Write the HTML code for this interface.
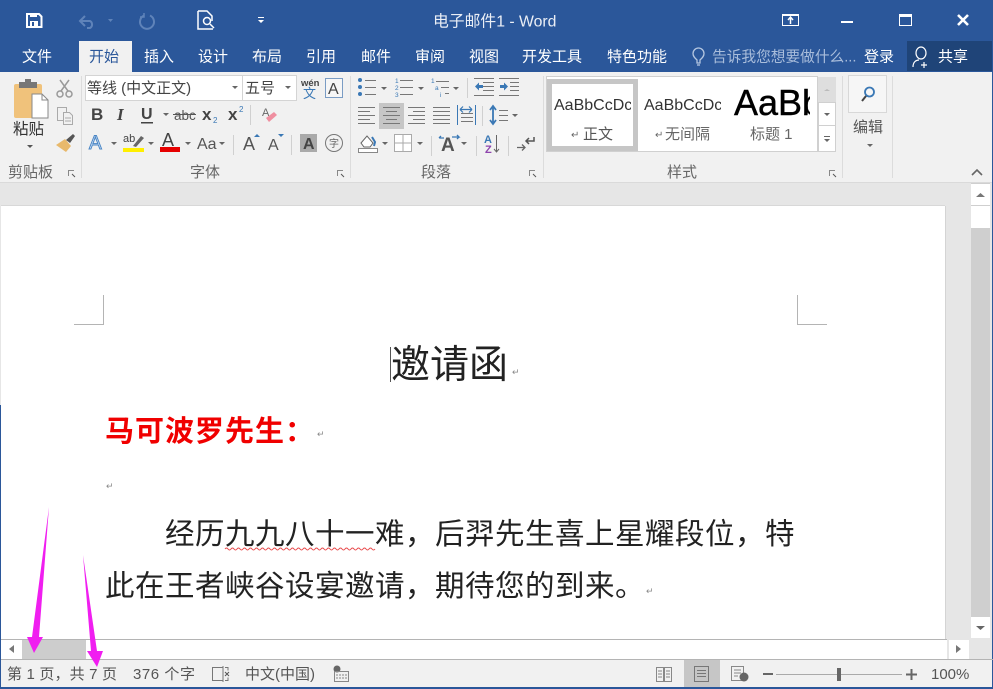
<!DOCTYPE html>
<html lang="zh"><head><meta charset="utf-8"><title>电子邮件1 - Word</title>
<style>
html,body{margin:0;padding:0;width:993px;height:689px;overflow:hidden;background:#fff}
svg{display:block;position:absolute;left:0;top:0;filter:blur(.35px)}
text{font-family:"Liberation Sans","Noto Sans CJK SC",sans-serif}
.cj{font-family:"Noto Sans CJK SC","Liberation Sans",sans-serif}
.tab{fill:#fff;font-size:15px}
.grp{fill:#666;font-size:15px}
.st{fill:#555;font-size:15px}
.ln{fill:none;stroke:#777;stroke-width:1}
.ar{fill:#666}
</style></head><body>
<svg width="993" height="689" viewBox="0 0 993 689" xmlns="http://www.w3.org/2000/svg">
<defs>
<clipPath id="c1"><rect x="552" y="90" width="79" height="30"/></clipPath>
<clipPath id="c2"><rect x="642" y="90" width="79" height="30"/></clipPath>
<clipPath id="c3"><rect x="730" y="80" width="80" height="44"/></clipPath>
<path id="dn" d="M0 0h6l-3 3z"/>
<g id="launch" fill="none" stroke="#888"><path d="M.5 6V.5H6"/><path d="M4 4l3 3" stroke="#555"/></g>
</defs>
<!-- backgrounds -->
<rect width="993" height="689" fill="#e6e6e6"/>
<rect width="993" height="72" fill="#2b579a"/>
<rect y="72" width="993" height="110" fill="#f1f1f1"/>
<rect y="182" width="993" height="1" fill="#dadada"/>
<rect x="1" y="206" width="944" height="434" fill="#fff"/>
<rect x="945" y="206" width="1" height="434" fill="#d4d4d4"/>
<rect x="1" y="205" width="944" height="1" fill="#d8d8d8"/>
<rect y="659" width="993" height="28" fill="#f1f1f1"/>
<rect y="687" width="993" height="2" fill="#2b579a"/>
<rect y="405" width="1" height="284" fill="#2b579a"/>
<rect x="992" y="72" width="1" height="617" fill="#2b579a"/>

<!-- title bar -->
<text x="433" y="26.500" font-size="15.800" fill="#fff" opacity=".9">电子邮件1 - Word</text>
<path d="M27 14h12l2.500 2.500V27H27z" fill="none" stroke="#fff" stroke-width="2"/>
<rect x="30" y="13" width="7" height="4" fill="#fff"/><rect x="30" y="21" width="8" height="6" fill="#fff"/><rect x="32" y="22" width="2" height="4" fill="#2b579a"/>
<g fill="none" stroke="#5f83b9" stroke-width="2"><path d="M81 21h9a4 4 0 0 1 0 7h-3"/><path d="M85 16l-5 5 5 5"/><path d="M150 15.500a7 7 0 1 1-6 0"/><path d="M144 13v4h-4" stroke-width="1.500"/></g>
<path d="M108 19h5l-2.500 3z" fill="#5f83b9"/>
<g fill="none" stroke="#fff" stroke-width="1.500"><path d="M198 11h9l5 5v5M198 11v18h15"/><circle cx="207" cy="21" r="3.500"/><path d="M210 24l4 4"/></g>
<path d="M258 17h6v1h-6zM258 20h6l-3 3z" fill="#fff"/>
<g fill="none" stroke="#fff"><rect x="782.500" y="14.500" width="16" height="11"/><path d="M790.500 24v-6M788 20l2.500-3 2.500 3" stroke-width="1.500"/></g>
<rect x="782" y="14" width="17" height="2" fill="#fff"/>
<rect x="841" y="21" width="12" height="2" fill="#fff"/>
<rect x="899.500" y="14.500" width="12" height="11" fill="none" stroke="#fff"/><rect x="899" y="14" width="13" height="3" fill="#fff"/>
<path d="M958 15l10 10M968 15l-10 10" stroke="#fff" stroke-width="2.600" fill="none"/>

<!-- tabs -->
<rect x="79" y="41" width="53" height="31" fill="#f1f1f1"/>
<text class="tab" x="22" y="61.500">文件</text>
<text class="tab" x="89" y="61.500" style="fill:#2b579a">开始</text>
<text class="tab" x="144" y="61.500">插入</text>
<text class="tab" x="198" y="61.500">设计</text>
<text class="tab" x="252" y="61.500">布局</text>
<text class="tab" x="306" y="61.500">引用</text>
<text class="tab" x="361" y="61.500">邮件</text>
<text class="tab" x="415" y="61.500">审阅</text>
<text class="tab" x="469" y="61.500">视图</text>
<text class="tab" x="522" y="61.500">开发工具</text>
<text class="tab" x="607" y="61.500">特色功能</text>
<g fill="none" stroke="#b4c6e0" stroke-width="1.300"><path d="M697 63v-3c-2-2-4-3.500-4-6.500a5.500 5.500 0 0 1 11 0c0 3-2 4.500-4 6.500v3z"/><path d="M697 65h3"/></g>
<text x="712" y="61.500" font-size="14.700" fill="#a9bddb">告诉我您想要做什么...</text>
<text class="tab" x="864" y="61.500">登录</text>
<rect x="907" y="41" width="85" height="30" fill="#1f4478"/>
<g fill="none" stroke="#fff" stroke-width="1.200"><ellipse cx="921" cy="53" rx="5" ry="6"/><path d="M913 67c0-5 3-7 6-7M924 62v6M921 65h6"/></g>
<text class="tab" x="938" y="61.500">共享</text>

<!-- clipboard group -->
<rect x="14" y="84" width="28" height="34" rx="2" fill="#f0c27b"/>
<rect x="19" y="82" width="18" height="6" fill="#777"/><rect x="25" y="79" width="6" height="4" fill="#777"/>
<path d="M32 94h10l6 6v18H32z" fill="#fff" stroke="#888"/><path d="M42 94v6h6" fill="none" stroke="#888"/>
<text x="13" y="134" font-size="15.500" fill="#333">粘贴</text>
<use href="#dn" x="27" y="145" fill="#555"/>
<g fill="none" stroke="#999" stroke-width="1.500"><circle cx="60" cy="94" r="3"/><circle cx="69" cy="94" r="3"/><path d="M61 91l8-11M68 91l-8-11"/></g>
<g fill="#f1f1f1" stroke="#aaa"><path d="M57.500 107.500h9v13h-9z"/><path d="M63.500 112.500h6l3 3v9h-9z"/><path d="M65 118h6M65 121h6" fill="none"/></g>
<path d="M56 145l9-6 6 7-5 6z" fill="#e8b96c"/><path d="M66 140l7-6 2 2-5 7z" fill="#555"/>
<use href="#launch" x="68" y="170"/>
<text class="grp" x="8" y="177">剪贴板</text>
<rect x="81" y="76" width="1" height="102" fill="#dcdcdc"/>

<!-- font group -->
<rect x="85.500" y="75.500" width="157" height="25" fill="#fff" stroke="#d4d4d4"/>
<rect x="242.500" y="75.500" width="54" height="25" fill="#fff" stroke="#d4d4d4"/>
<text x="87" y="93" font-size="15" fill="#444">等线 (中文正文)</text>
<use href="#dn" x="232" y="86" class="ar"/>
<text x="245" y="93" font-size="15" fill="#444">五号</text>
<use href="#dn" x="285" y="86" class="ar"/>
<text x="301" y="86" font-size="9.500" fill="#444" font-weight="bold">wén</text>
<text x="303" y="98" font-size="13" fill="#3a78b5">文</text>
<rect x="325.500" y="78.500" width="17" height="19" fill="#f6f6f6" stroke="#7a9cc4"/>
<text x="328" y="94" font-size="16" fill="#444">A</text>

<text x="91" y="120" font-size="17" font-weight="bold" fill="#444">B</text>
<text x="117" y="120" font-size="17" font-weight="bold" font-style="italic" fill="#444" style="font-family:'Liberation Serif',serif">I</text>
<text x="141" y="119" font-size="16" fill="#444" font-weight="bold">U</text><rect x="141" y="122" width="12" height="1.500" fill="#444"/>
<use href="#dn" x="163" y="113" class="ar"/>
<text x="174" y="120" font-size="13.500" fill="#555">abc</text><rect x="173" y="114" width="23" height="1" fill="#555"/>
<text x="202" y="120" font-size="17" font-weight="bold" fill="#444">x</text><text x="213" y="123" font-size="8" fill="#3a78b5">2</text>
<text x="228" y="120" font-size="17" font-weight="bold" fill="#444">x</text><text x="239" y="112" font-size="8" fill="#3a78b5">2</text>
<rect x="250" y="105" width="1" height="20" fill="#d0d0d0"/>
<text x="262" y="116" font-size="11" fill="#666">A</text><path d="M266 118l8-6 3 3-8 7z" fill="#ef8fa0"/>

<text x="89" y="149" font-size="19" fill="#dceafa" stroke="#4a86c5" stroke-width="1">A</text>
<use href="#dn" x="111" y="142" class="ar"/>
<text x="123" y="142" font-size="11" fill="#444">ab</text><path d="M133 146l8-10 3 2-8 9z" fill="#666"/>
<rect x="123" y="148" width="21" height="4" fill="#ffef00"/>
<use href="#dn" x="148" y="142" class="ar"/>
<text x="162" y="146" font-size="18" fill="#444">A</text><rect x="160" y="147" width="20" height="5" fill="#e60000"/>
<use href="#dn" x="185" y="142" class="ar"/>
<text x="197" y="149" font-size="16" fill="#555">Aa</text>
<use href="#dn" x="219" y="142" class="ar"/>
<rect x="233" y="135" width="1" height="20" fill="#d0d0d0"/>
<text x="243" y="150" font-size="18" fill="#555">A</text><path d="M254 137l3-3 3 3z" fill="#3a78b5"/>
<text x="268" y="150" font-size="16" fill="#555">A</text><path d="M278 134h6l-3 3z" fill="#3a78b5"/>
<rect x="291" y="135" width="1" height="20" fill="#d0d0d0"/>
<rect x="300" y="134" width="17" height="18" fill="#aaa"/><text x="303" y="149" font-size="16" font-weight="bold" fill="#444">A</text>
<circle cx="334" cy="143" r="8.500" fill="none" stroke="#777"/><text x="329" y="147" font-size="10" fill="#666">字</text>
<use href="#launch" x="337" y="170"/>
<text class="grp" x="190" y="177">字体</text>
<rect x="350" y="76" width="1" height="102" fill="#dcdcdc"/>

<!-- paragraph group -->
<g fill="#3a78b5"><circle cx="360" cy="80" r="2"/><circle cx="360" cy="87" r="2"/><circle cx="360" cy="94" r="2"/></g>
<path class="ln" d="M365 80.500h11M365 87.500h11M365 94.500h11M400 80.500h13M400 87.500h13M400 94.500h13M436 81.500h13M441 87.500h8M445 93.500h4"/>
<g font-size="6.500" fill="#3a78b5"><text x="395" y="83">1</text><text x="395" y="90">2</text><text x="395" y="97">3</text><text x="431" y="83">1</text><text x="435" y="90">a</text><text x="440" y="97">i</text></g>
<use href="#dn" x="381" y="87" class="ar"/><use href="#dn" x="418" y="87" class="ar"/><use href="#dn" x="453" y="87" class="ar"/>
<rect x="467" y="78" width="1" height="20" fill="#d0d0d0"/>
<path class="ln" d="M474 78.500h20M483 82.500h11M483 86.500h11M483 90.500h11M474 95.500h20M499 78.500h20M510 82.500h9M510 86.500h9M510 90.500h9M499 95.500h20"/>
<path d="M475 86.500l4-4v2.500h4v3h-4v2.500zM508 86.500l-4-4v2.500h-4v3h4v2.500z" fill="#3a78b5"/>

<rect x="379" y="103" width="25" height="26" fill="#c6c6c6"/>
<path class="ln" d="M358 107.500h17M358 111.500h12M358 115.500h17M358 119.500h12M358 123.500h17M383 107.500h17M386 111.500h11M383 115.500h17M386 119.500h11M383 123.500h17M408 107.500h17M413 111.500h12M408 115.500h17M413 119.500h12M408 123.500h17M433 107.500h17M433 111.500h17M433 115.500h17M433 119.500h17M433 123.500h17M461 113.500h12M461 117.500h12M461 121.500h12"/>
<path d="M457.500 105v20M475.500 105v20" stroke="#3a78b5" fill="none"/><path d="M460 109.500h12M460 109.500l3-3M460 109.500l3 3M472 109.500l-3-3M472 109.500l-3 3" stroke="#3a78b5" fill="none" stroke-width="1.200"/>
<rect x="482" y="106" width="1" height="20" fill="#d0d0d0"/>
<path d="M493 107v16M490 110l3-4 3 4M490 120l3 4 3-4" stroke="#3a78b5" stroke-width="1.800" fill="none"/>
<path class="ln" d="M499 110.500h9M499 115.500h9M499 120.500h9"/>
<use href="#dn" x="512" y="114" class="ar"/>

<path d="M358.500 148.500h19v4h-19z" fill="#fff" stroke="#888"/>
<path d="M361 143l6-7 6 7-3 4h-6z" fill="#fff" stroke="#666"/><path d="M372 137l3 5-1 4" stroke="#3a78b5" stroke-width="2" fill="none"/>
<use href="#dn" x="382" y="142" class="ar"/>
<rect x="394.500" y="134.500" width="17" height="17" fill="#fff" stroke="#aaa"/><path d="M403 135v16M395 143h16" stroke="#aaa"/>
<use href="#dn" x="417" y="142" class="ar"/>
<rect x="431" y="136" width="1" height="20" fill="#d0d0d0"/>
<text x="441" y="151" font-size="19" font-weight="bold" fill="#555">A</text>
<path d="M439 138h5M439 138l2-2M452 137h7l-2-2M459 137l-2 2" stroke="#3a78b5" stroke-width="1.300" fill="none"/>
<use href="#dn" x="461" y="142" class="ar"/>
<rect x="476" y="136" width="1" height="20" fill="#d0d0d0"/>
<text x="484" y="143" font-size="11" font-weight="bold" fill="#3a78b5">A</text><text x="485" y="153" font-size="11" font-weight="bold" fill="#8e44ad">Z</text>
<path d="M496.500 135v17M494 149l2.500 3 2.500-3" stroke="#666" fill="none"/>
<rect x="508" y="136" width="1" height="20" fill="#d0d0d0"/>
<path d="M517 147.500h8M522 144.500l3 3-3 3" stroke="#666" stroke-width="1.300" fill="none"/>
<path d="M534 137v4h-8M529 138l-3 3 3 3" stroke="#555" stroke-width="1.500" fill="none"/>
<use href="#launch" x="529" y="170"/>
<text class="grp" x="421" y="177">段落</text>
<rect x="543" y="76" width="1" height="102" fill="#dcdcdc"/>

<!-- styles -->
<rect x="546.500" y="76.500" width="271" height="75" fill="#fff" stroke="#d0d0d0"/>
<rect x="549.500" y="81.500" width="86" height="67" fill="#fff" stroke="#c6c6c6" stroke-width="5"/>
<g clip-path="url(#c1)"><text x="554" y="110" font-size="16" fill="#333">AaBbCcDc</text></g>
<text x="571" y="138" font-size="10" fill="#666">↵</text><text x="583" y="139" font-size="15" fill="#555">正文</text>
<g clip-path="url(#c2)"><text x="644" y="110" font-size="16" fill="#333">AaBbCcDc</text></g>
<text x="655" y="138" font-size="10" fill="#666">↵</text><text x="665" y="139" font-size="15" fill="#666">无间隔</text>
<g clip-path="url(#c3)"><text x="734" y="115" font-size="36" fill="#000" stroke="#000" stroke-width=".4">AaBbC</text></g>
<text x="750" y="139" font-size="15" fill="#666">标题 1</text>
<rect x="818" y="77" width="18" height="25" fill="#dedede"/>
<rect x="818.500" y="102.500" width="17" height="23" fill="#fff" stroke="#d0d0d0"/>
<rect x="818.500" y="125.500" width="17" height="26" fill="#fff" stroke="#d0d0d0"/>
<path d="M824 91l3-2 3 2z" fill="#bbb"/><use href="#dn" x="824" y="113" class="ar"/>
<path d="M824 136.500h6" stroke="#666"/><use href="#dn" x="824" y="139" class="ar"/>
<use href="#launch" x="829" y="170"/>
<text class="grp" x="667" y="177">样式</text>
<rect x="842" y="76" width="1" height="102" fill="#dcdcdc"/>

<!-- edit -->
<rect x="848.500" y="75.500" width="38" height="37" fill="#f6f6f6" stroke="#d8d8d8"/>
<circle cx="869.500" cy="92" r="4.500" fill="none" stroke="#3a78b5" stroke-width="1.800"/><path d="M866 96l-4 5" stroke="#444" stroke-width="2" fill="none"/>
<text x="853" y="132" font-size="15" fill="#555">编辑</text>
<use href="#dn" x="867" y="144" class="ar"/>
<rect x="892" y="76" width="1" height="102" fill="#dcdcdc"/>
<path d="M972 175l5-5 5 5" fill="none" stroke="#666" stroke-width="1.600"/>

<!-- vertical scrollbar -->
<rect x="971" y="183" width="19" height="455" fill="#cfcfcf"/>
<rect x="971" y="184" width="19" height="21" fill="#fff"/>
<path d="M976 197l4.500-4 4.500 4z" fill="#777"/>
<rect x="971" y="206" width="19" height="22" fill="#fff"/>
<rect x="971" y="617" width="19" height="21" fill="#fff"/>
<path d="M976 626l4.500 4 4.500-4z" fill="#666"/>

<!-- horizontal scrollbar -->
<rect x="1" y="640" width="946" height="19" fill="#fff"/>
<rect x="1" y="639" width="946" height="1" fill="#b4b4b4"/>
<rect x="1" y="659" width="992" height="1" fill="#b4b4b4"/>
<rect x="22" y="640" width="64" height="19" fill="#cdcdcd"/>
<path d="M14 645v8l-5-4z" fill="#777"/>
<rect x="949" y="640" width="20" height="19" fill="#fff"/>
<path d="M956 645v8l5-4z" fill="#777"/>

<!-- page content -->
<path d="M103.500 295v29.500H74M797.500 295v29.500H827" fill="none" stroke="#b4b4b4"/>
<rect x="390" y="347" width="1" height="35" fill="#555"/>
<text class="cj" x="391" y="378" font-size="39" fill="#222">邀请函</text>
<text x="512" y="375" font-size="9" fill="#888">↵</text>
<text class="cj" x="105" y="441" font-size="29" font-weight="bold" letter-spacing="1" fill="#f00000">马可波罗先生：</text>
<text x="317" y="437" font-size="9" fill="#888">↵</text>
<text x="106" y="489" font-size="9" fill="#888">↵</text>
<text class="cj" x="165" y="544" font-size="29.500" letter-spacing=".5" fill="#222">经历九九八十一难，后羿先生喜上星耀段位，特</text>
<path d="M225 549q1.500-2 3 0t3 0 3 0 3 0 3 0 3 0 3 0 3 0 3 0 3 0 3 0 3 0 3 0 3 0 3 0 3 0 3 0 3 0 3 0 3 0 3 0 3 0 3 0 3 0 3 0 3 0 3 0 3 0 3 0 3 0 3 0 3 0 3 0 3 0 3 0 3 0 3 0 3 0 3 0 3 0 3 0 3 0 3 0 3 0 3 0 3 0 3 0 3 0 3 0 3 0" fill="none" stroke="#e8484a" stroke-width="1"/>
<text class="cj" x="105" y="596" font-size="29.500" letter-spacing=".5" fill="#222">此在王者峡谷设宴邀请，期待您的到来。</text>
<text x="646" y="594" font-size="9" fill="#888">↵</text>

<!-- status bar -->
<text class="st" x="7" y="679" textLength="110">第 1 页，共 7 页</text>
<text class="st" x="133" y="679" textLength="62">376 个字</text>
<g fill="none" stroke="#777"><path d="M223 667.500h-10.500v13H223M225 667.500h3v3M225 680.500h3v-3M223 666v16"/><path d="M225 672l4 4M229 672l-4 4" stroke="#555"/></g>
<text class="st" x="245" y="679">中文(中国)</text>
<circle cx="337" cy="669" r="3.500" fill="#666"/>
<g fill="none" stroke="#888"><rect x="334.500" y="671.500" width="14" height="10"/><path d="M336 675h11M336 678h11" stroke-dasharray="2 1"/></g>
<rect x="684" y="660" width="36" height="27" fill="#c6c6c6"/>
<g fill="none" stroke="#888"><path d="M656.500 667.500h7v14h-7zM664.500 667.500h7v14h-7zM658 671h4M658 674h4M658 677h4M666 671h4M666 674h4M666 677h4"/>
<path d="M694.500 666.500h14v15h-14zM697 670.500h9M697 673.500h9M697 676.500h9" stroke="#777"/>
<path d="M731.500 666.500h12v14h-12zM734 670h7M734 673h7M734 676h4"/></g>
<circle cx="744" cy="677" r="4.500" fill="#666"/>
<rect x="763" y="673" width="10" height="2" fill="#666"/>
<rect x="776" y="674" width="126" height="1" fill="#aaa"/>
<rect x="837" y="668" width="4" height="13" fill="#666"/>
<path d="M906 674.500h11M911.500 669v11" stroke="#666" stroke-width="2" fill="none"/>
<text class="st" x="931" y="679">100%</text>

<!-- magenta arrows -->
<polygon points="49,507 39,637 43,637 34,653 27,637 32,637" fill="#f01ef0"/>
<polygon points="83,555 97,651 103,651 97,667 87,651 91,651" fill="#f01ef0"/>
</svg>
</body></html>
